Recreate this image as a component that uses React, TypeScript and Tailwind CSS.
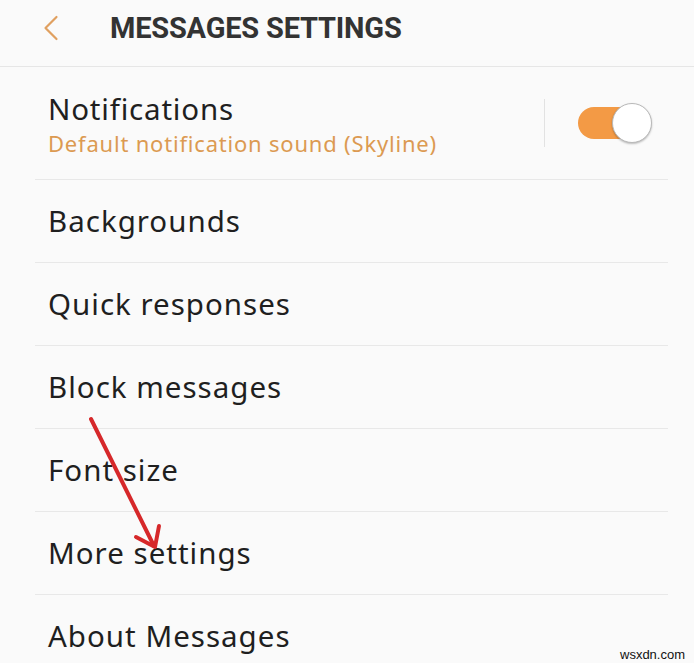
import { ChevronLeft } from 'lucide-react';

const rows = ['Backgrounds', 'Quick responses', 'Block messages', 'Font size', 'More settings', 'About Messages'];

export default function App() {
  return (
    <div className="relative w-[694px] h-[663px] overflow-hidden bg-[#fafafa] font-['Noto_Sans',sans-serif] text-[#222]">
      {/* Header */}
      <div className="flex items-start pt-[6px] h-[67px] border-b border-[#e6e6e6]">
        <ChevronLeft className="ml-[29px] w-[44px] h-[44px] text-[#e0a060]" strokeWidth={1.2} />
        <h1 className="ml-[37px] mt-[2px] font-['Roboto',sans-serif] text-[29px] leading-[40px] font-bold tracking-[-0.2px] text-[#333] whitespace-nowrap">
          MESSAGES SETTINGS
        </h1>
      </div>

      {/* Notifications row */}
      <div className="ml-[35px] mr-[26px] h-[113px] flex items-center border-b border-[#e8e8e8]">
        <div className="flex-1 pl-[13px] pt-[4px] tracking-[0.8px]">
          <p className="text-[29.5px] leading-[36px] text-[#1f1f1f]">Notifications</p>
          <p className="text-[22px] leading-[32px] text-[#dc9a52]">Default notification sound (Skyline)</p>
        </div>
        <div className="w-px h-[48px] bg-[#e2e2e2]" />
        <div className="relative ml-[33px] mr-[16px] w-[74px] h-[42px] flex items-center">
          <div className="w-[56px] h-[32px] rounded-full bg-[#f39a45]" />
          <div className="absolute right-0 top-[1px] w-[40px] h-[40px] rounded-full bg-white border border-[#b9b9b9] shadow-[0_1px_2px_rgba(0,0,0,0.25)]" />
        </div>
      </div>

      {/* Setting rows */}
      {rows.map((r) => (
        <div key={r} className="ml-[35px] mr-[26px] h-[83px] flex items-center border-b border-[#e8e8e8] last:border-b-0">
          <span className="pl-[13px] pt-[1px] text-[29.5px] tracking-[1px] text-[#1f1f1f]">{r}</span>
        </div>
      ))}

      {/* Hand-drawn arrow */}
      <svg className="absolute left-0 top-0 pointer-events-none" width="694" height="663">
        <g stroke="#d6282a" strokeWidth="4" strokeLinecap="round" strokeLinejoin="round" fill="none">
          <path d="M91 419 L154 546" />
          <path d="M136 537 L155 547 L159 526" />
        </g>
      </svg>

      <span className="absolute left-[620px] top-[645px] text-[13px] font-['Liberation_Sans',sans-serif] text-[#111]">wsxdn.com</span>
    </div>
  );
}
